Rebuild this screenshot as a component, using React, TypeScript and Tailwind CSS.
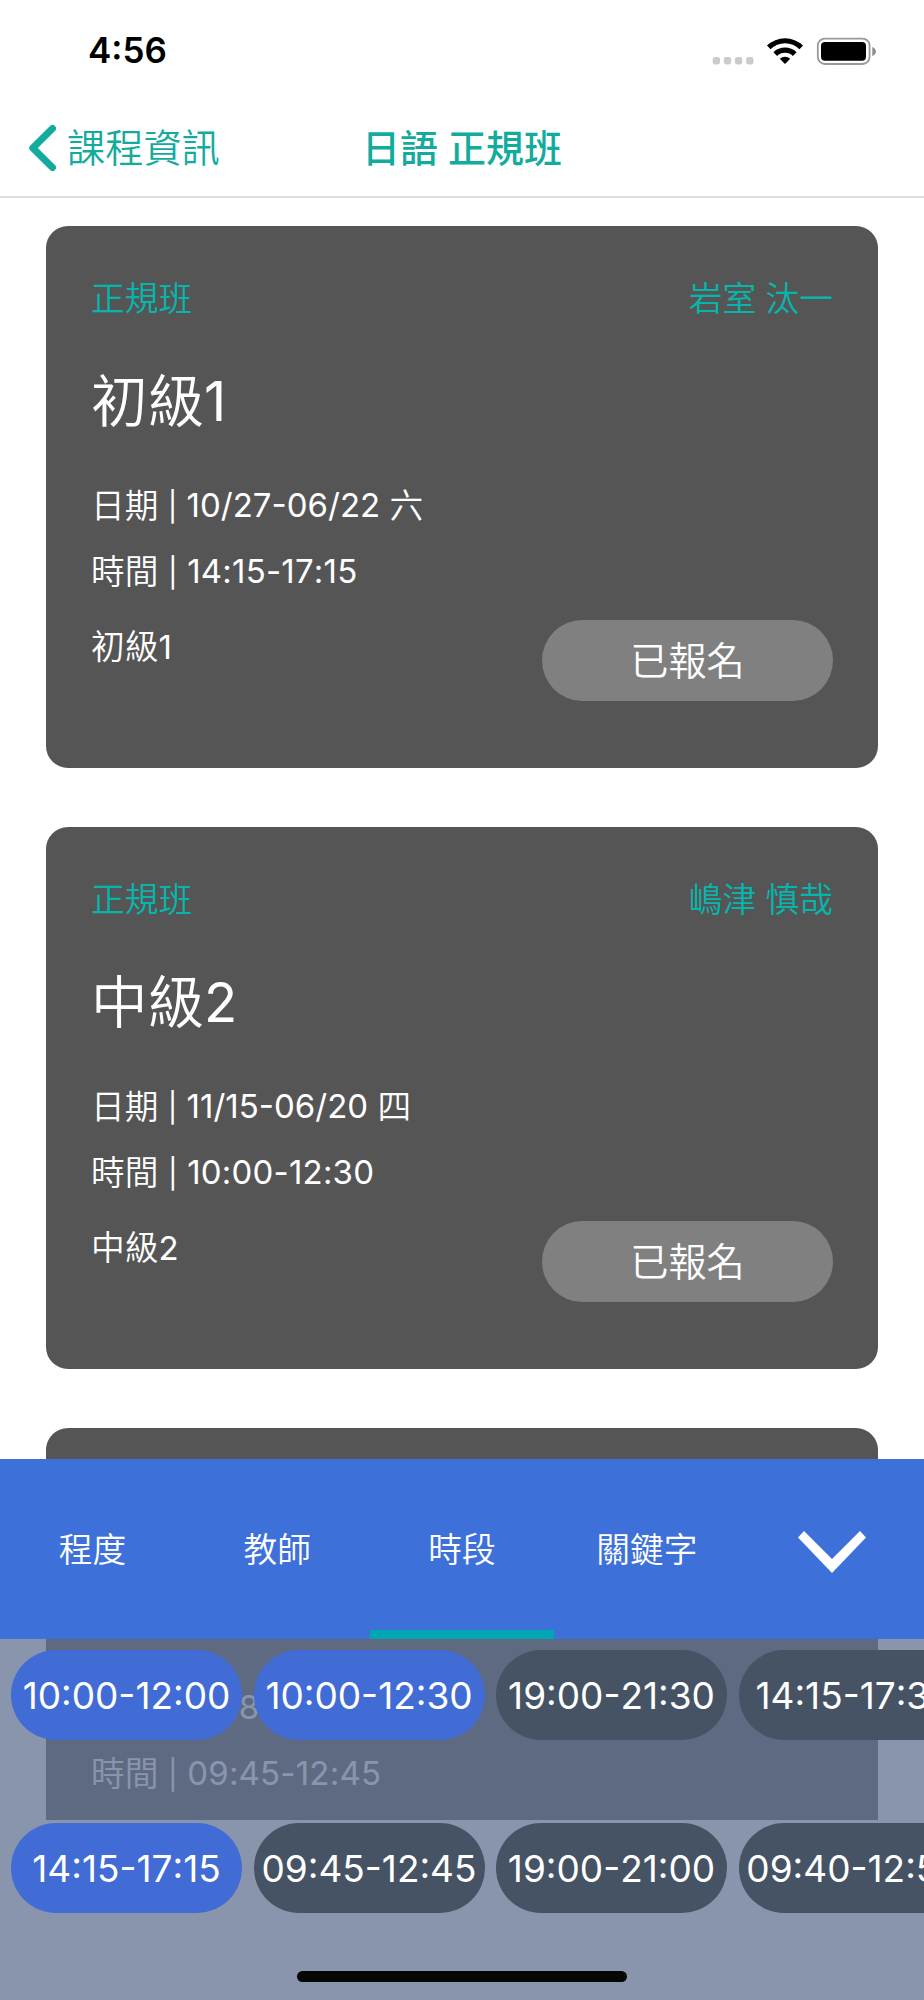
import clsx from "clsx";

type Course = {
  kind: string;
  teacher: string;
  level: string;
  step: number;
  date: string;
  day: string;
  time: string;
};

const courses: Course[] = [
  { kind: "正規班", teacher: "岩室 汰一", level: "初級", step: 1, date: "10/27-06/22", day: "六", time: "14:15-17:15" },
  { kind: "正規班", teacher: "嶋津 慎哉", level: "中級", step: 2, date: "11/15-06/20", day: "四", time: "10:00-12:30" },
  { kind: "正規班", teacher: "岩室 汰一", level: "初級", step: 2, date: "11/18-06/22", day: "日", time: "09:45-12:45" },
];

const tabs = ["程度", "教師", "時段", "關鍵字"];
const activeTab = "時段";

const slotRows = [
  [
    { label: "10:00-12:00", selected: true },
    { label: "10:00-12:30", selected: true },
    { label: "19:00-21:30", selected: false },
    { label: "14:15-17:30", selected: false },
  ],
  [
    { label: "14:15-17:15", selected: true },
    { label: "09:45-12:45", selected: false },
    { label: "19:00-21:00", selected: false },
    { label: "09:40-12:50", selected: false },
  ],
];

function StatusBar() {
  return (
    <div className="flex h-[101px] items-center justify-between pl-[88px] pr-[47px]">
      <span className="text-[35px] font-[590] leading-none text-black">4:56</span>
      <svg width="165" height="30" viewBox="712 35 165 30">
        <g fill="#cbcbcb">
          <rect x="712.7" y="56" width="7.4" height="7.4" rx="2.4" />
          <rect x="723.8" y="56" width="7.4" height="7.4" rx="2.4" />
          <rect x="734.9" y="56" width="7.4" height="7.4" rx="2.4" />
          <rect x="746.1" y="56" width="7.4" height="7.4" rx="2.4" />
        </g>
        <path d="M767 44.5a26 26 0 0 1 36 0l-3.5 3.7a20.6 20.6 0 0 0-29 0z" />
        <path d="M773.4 51.2a16.8 16.8 0 0 1 23.2 0l-3.7 3.8a11.4 11.4 0 0 0-15.8 0z" />
        <path d="M779.8 57.7a7.6 7.6 0 0 1 10.4 0l-5.2 5.4z" />
        <rect x="817.8" y="37.6" width="51.8" height="25.4" rx="7" fill="none" stroke="#999" strokeWidth="1.8" />
        <rect x="821" y="41" width="45" height="18.8" rx="4" />
        <path d="M872.3 46c4.8 1.8 4.8 7.2 0 9z" fill="#8c8c8c" />
      </svg>
    </div>
  );
}

function NavBar() {
  return (
    <div className="grid h-[97px] grid-cols-3 items-center border-b-2 border-[#dedede] pb-[2px] text-[38.2px] leading-none text-[#14ab9f]">
      <div className="flex items-center gap-[10px] pl-[28px]">
        <svg width="29" height="48" viewBox="0 0 29 48" fill="none">
          <path d="M24.5 4.5 4.8 24 24.5 43.5" stroke="currentColor" strokeWidth="7" strokeLinecap="round" strokeLinejoin="round" />
        </svg>
        <span className="whitespace-nowrap pt-[1px]">課程資訊</span>
      </div>
      <h1 className="whitespace-nowrap pt-[1px] text-center text-[38px] font-medium">日語 正規班</h1>
    </div>
  );
}

function CourseCard({ course }: { course: Course }) {
  return (
    <article className="h-[542px] shrink-0 rounded-[22px] bg-[#555] pl-[45px] pr-[45px] pt-[49px] text-[33.7px] text-white">
      <div className="flex h-[49px] items-center justify-between text-[#06b6ad]">
        <span>{course.kind}</span>
        <span>{course.teacher}</span>
      </div>
      <h2 className="mt-[37px] flex h-[82px] items-center text-[56.5px]">
        {course.level}
        <span className="text-[54.5px] font-normal">{course.step}</span>
      </h2>
      <div className="mt-[30px] flex h-[66px] items-center whitespace-pre">
        日期
        <span className="text-[33px] font-normal"> <span className="text-[29px]">|</span> {course.date} </span>
        {course.day}
      </div>
      <div className="flex h-[66px] items-center whitespace-pre">
        時間
        <span className="text-[33px] font-normal tracking-[0.2px]"> <span className="text-[29px]">|</span> {course.time}</span>
      </div>
      <div className="mt-[15px] flex justify-between">
        <span className="flex h-[55px] items-center">
          {course.level}
          <span className="text-[33px] font-normal">{course.step}</span>
        </span>
        <button className="h-[81px] w-[291px] rounded-full bg-[#808080] pt-[2px] text-[38.2px]">已報名</button>
      </div>
    </article>
  );
}

function FilterTabs() {
  return (
    <div className="grid h-[180px] grid-cols-5 bg-[#3d70d9]">
      {tabs.map((tab) => (
        <button
          key={tab}
          className={clsx(
            "border-y-[9px] border-transparent pt-[2px] text-[33.7px] text-white",
            tab === activeTab && "border-b-[#00a6b0]",
          )}
        >
          {tab}
        </button>
      ))}
      <button className="flex items-center justify-center pt-[6px]">
        <svg width="70" height="42" viewBox="0 0 70 42">
          <path d="M7 0 35 28 63 0l6 6.5L35 42 1 6.5z" fill="#fff" />
        </svg>
      </button>
    </div>
  );
}

function SlotPanel() {
  return (
    <div className="flex h-[361px] flex-col gap-[83px] bg-[#617292]/75 pl-[11px] pt-[11px]">
      {slotRows.map((row, i) => (
        <div key={i} className="flex gap-[11.5px]">
          {row.map((slot) => (
            <button
              key={slot.label}
              className={clsx(
                "h-[90px] w-[231px] shrink-0 whitespace-nowrap rounded-full pt-[1px] text-[37px] font-normal text-white",
                slot.selected ? "bg-[#416bd5]" : "bg-[#455365]",
              )}
            >
              {slot.label}
            </button>
          ))}
        </div>
      ))}
    </div>
  );
}

export default function App() {
  return (
    <div className="relative h-[2000px] w-[924px] overflow-hidden bg-white font-['Inter','Noto_Sans_CJK_TC',sans-serif] font-[350] [font-kerning:none]">
      <StatusBar />
      <NavBar />
      <main className="flex h-[1622px] flex-col gap-[59px] overflow-hidden px-[46px] pt-[28px]">
        {courses.map((course) => (
          <CourseCard key={course.date} course={course} />
        ))}
      </main>

      <div className="absolute inset-x-0 bottom-0">
        <FilterTabs />
        <SlotPanel />
        <div className="absolute bottom-[18px] left-[297px] h-[11px] w-[330px] rounded-full bg-[#060606]" />
      </div>
    </div>
  );
}
